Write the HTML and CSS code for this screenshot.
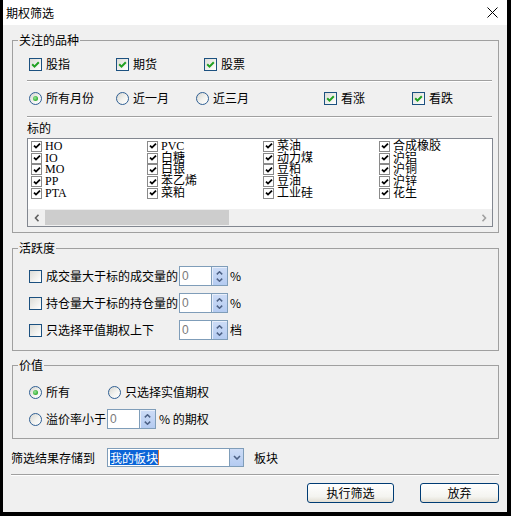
FILE: index.html
```html
<!DOCTYPE html>
<html lang="zh-CN">
<head>
<meta charset="utf-8">
<title>期权筛选</title>
<link rel="stylesheet" href="styles.css">
</head>
<body>
<div class="win">
  <div class="titlebar">
    <span class="title">期权筛选</span>
    <svg class="close" viewBox="0 0 11 11"><path d="M0.5 0.5 L10.5 10.5 M10.5 0.5 L0.5 10.5" stroke="#000" stroke-width="1" fill="none"/></svg>
  </div>
  <div class="content">
    <fieldset class="group">
      <legend class="legend">关注的品种</legend>
      <div class="inner g1">
        <div class="row row-first">
          <label class="opt w87"><span class="cb"><svg viewBox="0 0 9 9"><path d="M1.2 4.3 L3.5 6.6 L7.8 2.2" stroke="#21a121" stroke-width="2" fill="none"/></svg></span>股指</label>
          <label class="opt w88"><span class="cb"><svg viewBox="0 0 9 9"><path d="M1.2 4.3 L3.5 6.6 L7.8 2.2" stroke="#21a121" stroke-width="2" fill="none"/></svg></span>期货</label>
          <label class="opt"><span class="cb"><svg viewBox="0 0 9 9"><path d="M1.2 4.3 L3.5 6.6 L7.8 2.2" stroke="#21a121" stroke-width="2" fill="none"/></svg></span>股票</label>
        </div>
        <div class="sep sep-a"></div>
        <div class="row row-second">
          <label class="opt w87"><span class="rb on"><span class="dot"></span></span>所有月份</label>
          <label class="opt w80"><span class="rb"></span>近一月</label>
          <label class="opt w128"><span class="rb"></span>近三月</label>
          <label class="opt w88"><span class="cb"><svg viewBox="0 0 9 9"><path d="M1.2 4.3 L3.5 6.6 L7.8 2.2" stroke="#21a121" stroke-width="2" fill="none"/></svg></span>看涨</label>
          <label class="opt"><span class="cb"><svg viewBox="0 0 9 9"><path d="M1.2 4.3 L3.5 6.6 L7.8 2.2" stroke="#21a121" stroke-width="2" fill="none"/></svg></span>看跌</label>
        </div>
        <div class="sep sep-b"></div>
        <div class="sublabel">标的</div>
        <div class="listbox">
          <div class="lb-items">
            <div class="lb-item"><span class="lcb"><svg viewBox="0 0 8 8"><path d="M1 3.6 L3 5.6 L7 1.6" stroke="#000" stroke-width="1.8" fill="none"/></svg></span><span class="lat">HO</span></div>
            <div class="lb-item"><span class="lcb"><svg viewBox="0 0 8 8"><path d="M1 3.6 L3 5.6 L7 1.6" stroke="#000" stroke-width="1.8" fill="none"/></svg></span><span class="lat">IO</span></div>
            <div class="lb-item"><span class="lcb"><svg viewBox="0 0 8 8"><path d="M1 3.6 L3 5.6 L7 1.6" stroke="#000" stroke-width="1.8" fill="none"/></svg></span><span class="lat">MO</span></div>
            <div class="lb-item"><span class="lcb"><svg viewBox="0 0 8 8"><path d="M1 3.6 L3 5.6 L7 1.6" stroke="#000" stroke-width="1.8" fill="none"/></svg></span><span class="lat">PP</span></div>
            <div class="lb-item"><span class="lcb"><svg viewBox="0 0 8 8"><path d="M1 3.6 L3 5.6 L7 1.6" stroke="#000" stroke-width="1.8" fill="none"/></svg></span><span class="lat">PTA</span></div>
            <div class="lb-item"><span class="lcb"><svg viewBox="0 0 8 8"><path d="M1 3.6 L3 5.6 L7 1.6" stroke="#000" stroke-width="1.8" fill="none"/></svg></span><span class="lat">PVC</span></div>
            <div class="lb-item"><span class="lcb"><svg viewBox="0 0 8 8"><path d="M1 3.6 L3 5.6 L7 1.6" stroke="#000" stroke-width="1.8" fill="none"/></svg></span>白糖</div>
            <div class="lb-item"><span class="lcb"><svg viewBox="0 0 8 8"><path d="M1 3.6 L3 5.6 L7 1.6" stroke="#000" stroke-width="1.8" fill="none"/></svg></span>白银</div>
            <div class="lb-item"><span class="lcb"><svg viewBox="0 0 8 8"><path d="M1 3.6 L3 5.6 L7 1.6" stroke="#000" stroke-width="1.8" fill="none"/></svg></span>苯乙烯</div>
            <div class="lb-item"><span class="lcb"><svg viewBox="0 0 8 8"><path d="M1 3.6 L3 5.6 L7 1.6" stroke="#000" stroke-width="1.8" fill="none"/></svg></span>菜粕</div>
            <div class="lb-item"><span class="lcb"><svg viewBox="0 0 8 8"><path d="M1 3.6 L3 5.6 L7 1.6" stroke="#000" stroke-width="1.8" fill="none"/></svg></span>菜油</div>
            <div class="lb-item"><span class="lcb"><svg viewBox="0 0 8 8"><path d="M1 3.6 L3 5.6 L7 1.6" stroke="#000" stroke-width="1.8" fill="none"/></svg></span>动力煤</div>
            <div class="lb-item"><span class="lcb"><svg viewBox="0 0 8 8"><path d="M1 3.6 L3 5.6 L7 1.6" stroke="#000" stroke-width="1.8" fill="none"/></svg></span>豆粕</div>
            <div class="lb-item"><span class="lcb"><svg viewBox="0 0 8 8"><path d="M1 3.6 L3 5.6 L7 1.6" stroke="#000" stroke-width="1.8" fill="none"/></svg></span>豆油</div>
            <div class="lb-item"><span class="lcb"><svg viewBox="0 0 8 8"><path d="M1 3.6 L3 5.6 L7 1.6" stroke="#000" stroke-width="1.8" fill="none"/></svg></span>工业硅</div>
            <div class="lb-item"><span class="lcb"><svg viewBox="0 0 8 8"><path d="M1 3.6 L3 5.6 L7 1.6" stroke="#000" stroke-width="1.8" fill="none"/></svg></span>合成橡胶</div>
            <div class="lb-item"><span class="lcb"><svg viewBox="0 0 8 8"><path d="M1 3.6 L3 5.6 L7 1.6" stroke="#000" stroke-width="1.8" fill="none"/></svg></span>沪铝</div>
            <div class="lb-item"><span class="lcb"><svg viewBox="0 0 8 8"><path d="M1 3.6 L3 5.6 L7 1.6" stroke="#000" stroke-width="1.8" fill="none"/></svg></span>沪铜</div>
            <div class="lb-item"><span class="lcb"><svg viewBox="0 0 8 8"><path d="M1 3.6 L3 5.6 L7 1.6" stroke="#000" stroke-width="1.8" fill="none"/></svg></span>沪锌</div>
            <div class="lb-item"><span class="lcb"><svg viewBox="0 0 8 8"><path d="M1 3.6 L3 5.6 L7 1.6" stroke="#000" stroke-width="1.8" fill="none"/></svg></span>花生</div>
          </div>
          <div class="hscroll">
            <span class="sb-arrow"><svg viewBox="0 0 6 8"><path d="M4.5 0.8 L1.5 4 L4.5 7.2" stroke="#606060" stroke-width="1.6" fill="none"/></svg></span>
            <span class="sb-thumb"></span>
            <span class="sb-track"></span>
            <span class="sb-arrow"><svg viewBox="0 0 6 8"><path d="M1.5 0.8 L4.5 4 L1.5 7.2" stroke="#a0a0a0" stroke-width="1.6" fill="none"/></svg></span>
          </div>
        </div>
      </div>
    </fieldset>

    <fieldset class="group">
      <legend class="legend">活跃度</legend>
      <div class="inner g2">
        <div class="row">
          <label class="opt w150"><span class="cb"></span>成交量大于标的成交量的</label>
          <span class="spin"><span class="spin-val">0</span><span class="spin-btn"><svg viewBox="0 0 7 4"><path d="M0.8 3.4 L3.5 0.8 L6.2 3.4" stroke="#4d6185" stroke-width="1.5" fill="none"/></svg><svg viewBox="0 0 7 4"><path d="M0.8 0.6 L3.5 3.2 L6.2 0.6" stroke="#4d6185" stroke-width="1.5" fill="none"/></svg></span></span>
          <span class="unit">%</span>
        </div>
        <div class="row">
          <label class="opt w150"><span class="cb"></span>持仓量大于标的持仓量的</label>
          <span class="spin"><span class="spin-val">0</span><span class="spin-btn"><svg viewBox="0 0 7 4"><path d="M0.8 3.4 L3.5 0.8 L6.2 3.4" stroke="#4d6185" stroke-width="1.5" fill="none"/></svg><svg viewBox="0 0 7 4"><path d="M0.8 0.6 L3.5 3.2 L6.2 0.6" stroke="#4d6185" stroke-width="1.5" fill="none"/></svg></span></span>
          <span class="unit">%</span>
        </div>
        <div class="row">
          <label class="opt w150"><span class="cb"></span>只选择平值期权上下</label>
          <span class="spin"><span class="spin-val">0</span><span class="spin-btn"><svg viewBox="0 0 7 4"><path d="M0.8 3.4 L3.5 0.8 L6.2 3.4" stroke="#4d6185" stroke-width="1.5" fill="none"/></svg><svg viewBox="0 0 7 4"><path d="M0.8 0.6 L3.5 3.2 L6.2 0.6" stroke="#4d6185" stroke-width="1.5" fill="none"/></svg></span></span>
          <span class="unit">档</span>
        </div>
      </div>
    </fieldset>

    <fieldset class="group g3-box">
      <legend class="legend">价值</legend>
      <div class="inner g3">
        <div class="row">
          <label class="opt w79"><span class="rb on"><span class="dot"></span></span>所有</label>
          <label class="opt"><span class="rb"></span>只选择实值期权</label>
        </div>
        <div class="row">
          <label class="opt w78"><span class="rb"></span>溢价率小于</label>
          <span class="spin"><span class="spin-val">0</span><span class="spin-btn"><svg viewBox="0 0 7 4"><path d="M0.8 3.4 L3.5 0.8 L6.2 3.4" stroke="#4d6185" stroke-width="1.5" fill="none"/></svg><svg viewBox="0 0 7 4"><path d="M0.8 0.6 L3.5 3.2 L6.2 0.6" stroke="#4d6185" stroke-width="1.5" fill="none"/></svg></span></span>
          <span class="unit unit-wide">% 的期权</span>
        </div>
      </div>
    </fieldset>

    <div class="save-row">
      <span class="save-label">筛选结果存储到</span>
      <div class="combo">
        <span class="combo-text"><span class="sel">我的板块</span></span>
        <span class="combo-btn"><svg viewBox="0 0 8 5"><path d="M1 1 L4 4 L7 1" stroke="#4d6185" stroke-width="1.6" fill="none"/></svg></span>
      </div>
      <span class="save-unit">板块</span>
    </div>
    <div class="sep sep-full"></div>
    <div class="buttons">
      <button class="btn btn-run">执行筛选</button>
      <button class="btn btn-cancel">放弃</button>
    </div>
  </div>
</div>
</body>
</html>
```

FILE: styles.css
```css
* { box-sizing: border-box; }
html, body { margin: 0; padding: 0; }
body {
  background: #000;
  width: 511px;
  height: 516px;
  overflow: hidden;
  font-family: "Noto Sans CJK SC", "Microsoft YaHei", sans-serif;
  font-size: 12px;
  color: #000;
}
.win {
  margin-left: 3px;
  width: 504px;
  height: 512px;
  background: #f0f0f0;
  display: flex;
  flex-direction: column;
}
.titlebar {
  height: 25px;
  flex: none;
  background: #fff;
  display: flex;
  align-items: center;
  justify-content: space-between;
  padding: 0 9px 0 3px;
}
.title { line-height: 16px; }
.close { width: 11px; height: 11px; display: block; }

.content { padding: 0 8px; display: flex; flex-direction: column; }

.group {
  margin: 7px 0 0 1px;
  padding: 0;
  border: 1px solid #a0a0a0;
  min-width: 0;
}
.g3-box { margin-top: 6px; }
.legend {
  margin-left: 5px;
  padding: 0 1px;
  line-height: 16px;
  height: 16px;
}
.inner { display: flex; flex-direction: column; }
.g1 { padding: 0 5px 5px 14px; }
.g2 { padding: 10px 0 10px 16px; gap: 7px; }
.g3 { padding: 9px 0 9px 16px; gap: 7px; }

.row { display: flex; align-items: center; height: 20px; flex: none; }
.row-first { margin-top: 6px; padding-left: 2px; }
.row-second { margin-top: 6px; padding-left: 2px; }

.opt { display: flex; align-items: center; gap: 4px; flex: none; line-height: 16px; white-space: nowrap; }
.w78 { width: 78px; }
.w79 { width: 79px; }
.w80 { width: 80px; }
.w87 { width: 87px; }
.w88 { width: 88px; }
.w128 { width: 128px; }
.w150 { width: 150px; }

.cb {
  width: 13px; height: 13px; flex: none;
  border: 1px solid #1c5180;
  background: linear-gradient(135deg, #dcdcd7 0%, #f2f2ef 60%, #fff 100%);
  display: flex; align-items: center; justify-content: center;
}
.cb svg { width: 9px; height: 9px; display: block; }

.rb {
  width: 13px; height: 13px; flex: none;
  border-radius: 50%;
  border: 1px solid #2f5f93;
  background: linear-gradient(135deg, #d6d6d0 0%, #f3f3f0 55%, #fff 100%);
  display: flex; align-items: center; justify-content: center;
}
.dot {
  width: 5px; height: 5px; border-radius: 50%;
  background: radial-gradient(circle at 40% 40%, #9be69b 0%, #3cb43c 60%, #21a121 100%);
}

.sep { height: 2px; border-top: 1px solid #a0a0a0; border-bottom: 1px solid #fff; flex: none; }
.sep-a { margin-top: 6px; margin-right: 1px; }
.sep-b { margin-top: 8px; margin-right: 1px; }
.sublabel { margin-top: 2px; line-height: 16px; height: 16px; }

.listbox {
  margin-top: 2px;
  height: 89px;
  border: 1px solid #828790;
  background: #fff;
  display: flex;
  flex-direction: column;
}
.lb-items {
  padding: 1.5px 0 0 3px;
  display: grid;
  grid-template-rows: repeat(5, 11.75px);
  grid-auto-flow: column;
  grid-auto-columns: 116px;
}
.lb-item {
  display: flex; align-items: center; gap: 3px;
  height: 11.75px;
  line-height: 11px; white-space: nowrap;
  font-family: "Liberation Serif", "Noto Sans CJK SC", serif;
  font-size: 12px;
}
.lat { font-family: "Liberation Serif", serif; }
.lcb {
  width: 11px; height: 11px; flex: none;
  border: 1px solid #8a8a8a;
  background: #fff;
  display: flex; align-items: center; justify-content: center;
}
.lcb svg { width: 8px; height: 8px; display: block; }

.hscroll {
  margin-top: auto;
  height: 17px;
  background: #f0f0f0;
  display: flex;
  align-items: stretch;
}
.sb-arrow { width: 17px; flex: none; display: flex; align-items: center; justify-content: center; }
.sb-arrow svg { width: 6px; height: 8px; display: block; }
.sb-thumb { width: 184px; flex: none; margin: 1px 0; background: #cdcdcd; }
.sb-track { flex: 1; }

.spin {
  display: flex; flex: none;
  width: 49px; height: 20px;
  border: 1px solid #7f9db9;
  background: #fff;
}
.spin-val {
  flex: 1;
  padding-left: 2px;
  color: #7a7a7a;
  line-height: 18px;
  font-family: "Liberation Sans", sans-serif;
  font-size: 12px;
}
.spin-btn {
  width: 16px; flex: none;
  border-left: 1px solid #7f9db9;
  background: linear-gradient(#cddcf6, #b4cbf1);
  box-shadow: inset 1px 1px 0 #e8effb;
  display: flex; flex-direction: column; align-items: center; justify-content: center; gap: 3px;
}
.spin-btn svg { width: 7px; height: 4px; display: block; }
.unit { margin-left: 2px; line-height: 16px; }
.unit-wide { margin-left: 3px; }

.save-row { display: flex; align-items: center; margin-top: 9px; height: 19px; }
.save-label { width: 96px; flex: none; line-height: 16px; }
.combo {
  width: 137px; height: 19px; flex: none;
  border: 1px solid #7f9db9;
  background: #fff;
  display: flex;
}
.combo-text { flex: 1; padding-left: 2px; display: flex; align-items: center; }
.sel {
  background: #0a64d7;
  color: #fff;
  line-height: 15px;
  height: 15px;
  border-right: 1px solid #e07830;
}
.combo-btn {
  width: 14px; flex: none;
  background: linear-gradient(#cddcf6, #b4cbf1);
  border-left: 1px solid #7f9db9;
  display: flex; align-items: center; justify-content: center;
}
.combo-btn svg { width: 8px; height: 5px; display: block; }
.save-unit { margin-left: 10px; line-height: 16px; }

.sep-full { margin-top: 7px; }

.buttons { display: flex; justify-content: flex-end; gap: 26px; margin-top: 7px; }
.btn {
  height: 20px;
  padding: 0;
  border: 1px solid #003c74;
  border-radius: 3px;
  background: linear-gradient(#ffffff 0%, #f4f4f0 70%, #e2ded3 100%);
  font-family: "Noto Sans CJK SC", "Microsoft YaHei", sans-serif;
  font-size: 12px;
  line-height: 16px;
  color: #000;
}
.btn-run { width: 87px; }
.btn-cancel { width: 79px; }
```
